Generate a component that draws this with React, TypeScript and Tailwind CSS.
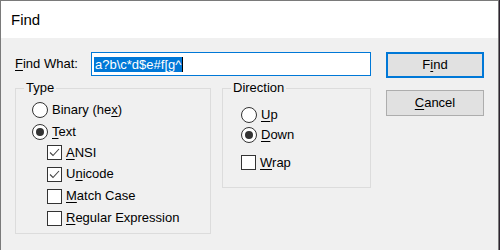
import React from "react";

const font = { fontFamily: '"Liberation Sans", Arial, sans-serif' };

function Radio({ checked }: { checked?: boolean }) {
  return (
    <span className="w-[16px] h-[16px] rounded-full border border-[#333] bg-white flex items-center justify-center shrink-0">
      {checked && <span className="w-[8px] h-[8px] rounded-full bg-[#333]" />}
    </span>
  );
}

function Check({ checked }: { checked?: boolean }) {
  return (
    <span className="w-[15px] h-[15px] border border-[#333] bg-white flex items-center justify-center shrink-0">
      {checked && (
        <svg width="13" height="13" viewBox="0 0 13 13">
          <path d="M2 6.5 L5 9.5 L11 3" fill="none" stroke="#444" strokeWidth="1.1" />
        </svg>
      )}
    </span>
  );
}

function U({ children }: { children: React.ReactNode }) {
  return <span className="underline underline-offset-[2px] decoration-1">{children}</span>;
}

export default function App() {
  return (
    <div className="w-[500px] h-[250px] bg-[#2d2430] text-[13px] text-black" style={font}>
      <div className="w-[499px] h-[250px] border-l border-t border-r border-[#7a7a7a] flex flex-col">
        <div className="h-[37px] bg-white flex items-center pl-[10px] text-[15px] pt-[2px]">Find</div>
        <div className="flex-1 bg-[#f0f0f0] flex pl-[14px] pt-[14px]">
          <div className="w-[356px] flex flex-col">
            <div className="h-[24px] flex items-center">
              <span className="w-[76px]">
                <U>F</U>ind What:
              </span>
              <div className="w-[280px] h-[24px] border border-[#0078d7] bg-white flex items-center pl-[2px]">
                <span className="h-[15px] leading-[15px] bg-[#0078d7] text-white px-[1px]">a?b\c*d$e#f[g^</span>
                <span className="w-[1px] h-[15px] bg-black" />
              </div>
            </div>
            <div className="flex mt-[4px]">
              <fieldset className="w-[196px] h-[154px] border border-[#dcdcdc] pl-[16px]">
                <legend className="ml-[-8px] px-[2px] leading-[16px]">Type</legend>
                <div className="flex flex-col pt-[3px]">
                  <label className="h-[22px] flex items-center gap-[4px]">
                    <Radio />
                    <span>
                      Binary (he<U>x</U>)
                    </span>
                  </label>
                  <label className="h-[21px] flex items-center gap-[4px]">
                    <Radio checked />
                    <span>
                      <U>T</U>ext
                    </span>
                  </label>
                  <div className="pl-[15px] flex flex-col">
                    <label className="h-[21px] flex items-center gap-[4px]">
                      <Check checked />
                      <span>
                        <U>A</U>NSI
                      </span>
                    </label>
                    <label className="h-[22px] flex items-center gap-[4px]">
                      <Check checked />
                      <span>
                        U<U>n</U>icode
                      </span>
                    </label>
                    <label className="h-[22px] flex items-center gap-[4px]">
                      <Check />
                      <span>
                        <U>M</U>atch Case
                      </span>
                    </label>
                    <label className="h-[22px] flex items-center gap-[4px]">
                      <Check />
                      <span>
                        <U>R</U>egular Expression
                      </span>
                    </label>
                  </div>
                </div>
              </fieldset>
              <fieldset className="ml-[11px] w-[149px] h-[108px] border border-[#dcdcdc] pl-[18px]">
                <legend className="ml-[-10px] px-[2px] leading-[16px]">Direction</legend>
                <div className="flex flex-col pt-[9px]">
                  <label className="h-[20px] flex items-center gap-[4px]">
                    <Radio />
                    <span>
                      <U>U</U>p
                    </span>
                  </label>
                  <label className="h-[20px] flex items-center gap-[4px]">
                    <Radio checked />
                    <span>
                      <U>D</U>own
                    </span>
                  </label>
                  <label className="h-[21px] mt-[7px] flex items-center gap-[4px]">
                    <Check />
                    <span>
                      <U>W</U>rap
                    </span>
                  </label>
                </div>
              </fieldset>
            </div>
          </div>
          <div className="ml-[15px] flex flex-col">
            <button className="w-[98px] h-[26px] border-2 border-[#0078d7] bg-[#e1e1e1] flex items-center justify-center">
              F<U>i</U>nd
            </button>
            <button className="mt-[12px] w-[98px] h-[26px] border border-[#adadad] bg-[#e1e1e1] flex items-center justify-center">
              <U>C</U>ancel
            </button>
          </div>
        </div>
      </div>
    </div>
  );
}
